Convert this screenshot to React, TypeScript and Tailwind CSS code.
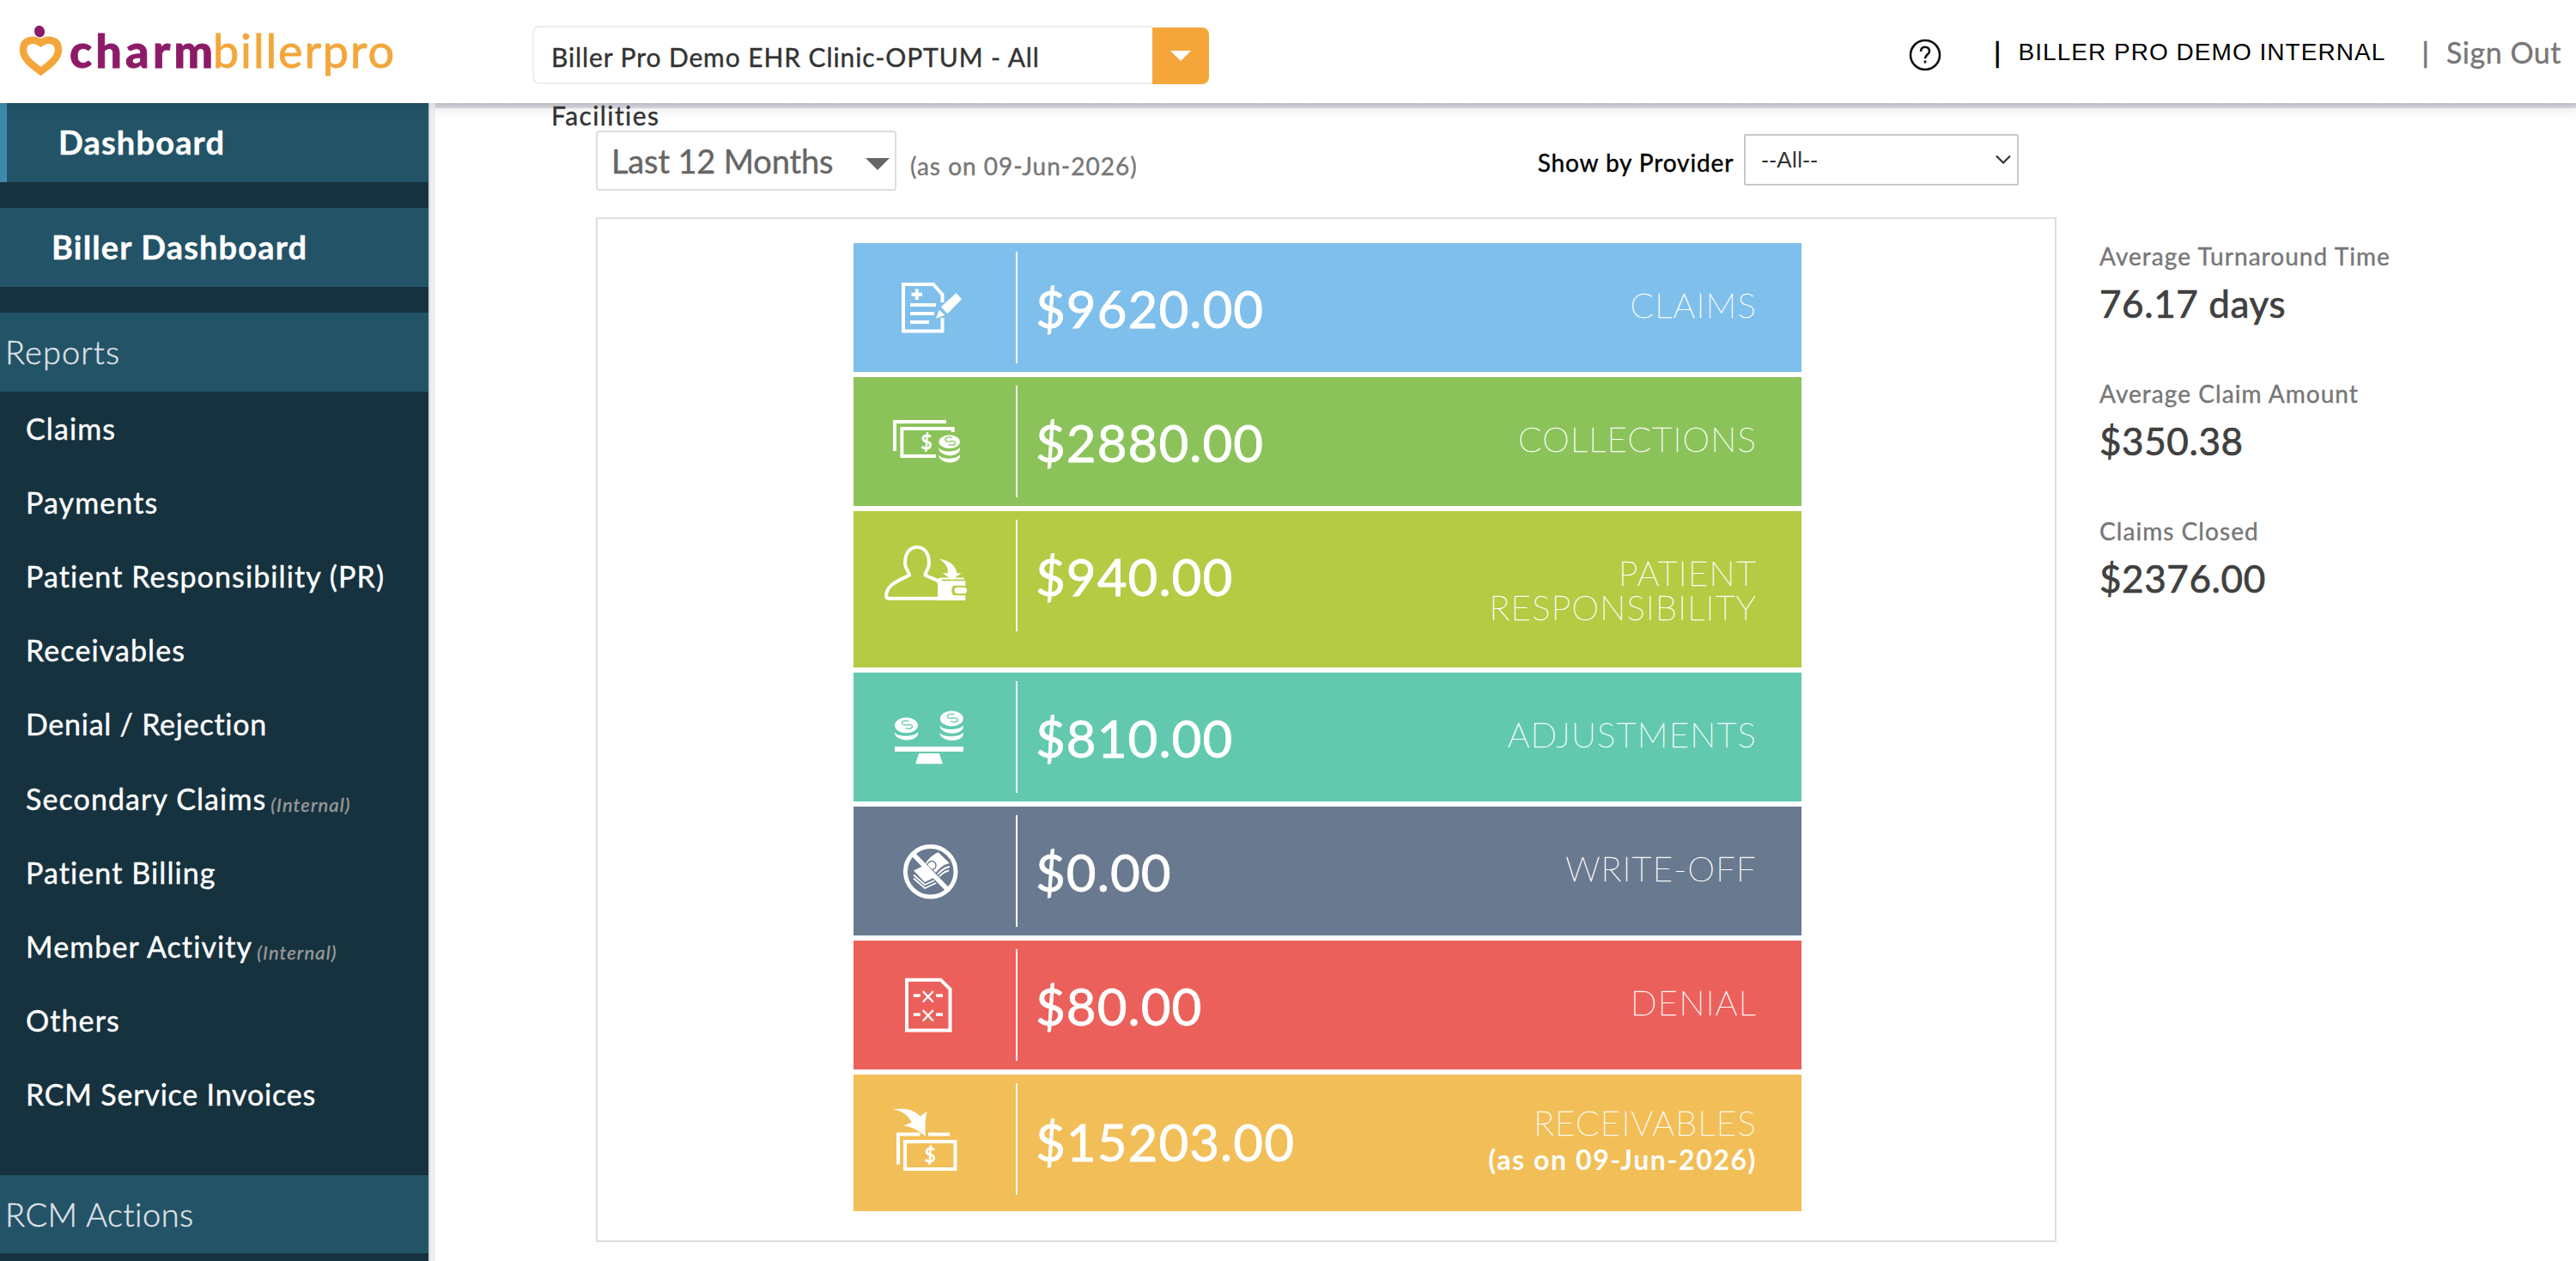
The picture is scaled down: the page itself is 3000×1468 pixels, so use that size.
import type { ReactNode } from 'react';

interface ReportLink {
  label: string;
  internal?: boolean;
  tracking?: string;
}

interface Metric {
  label: string;
  note?: string;
  amount: string;
  color: string;
  height: string;
  icon: ReactNode;
}

const reports: ReportLink[] = [
  { label: 'Claims' },
  { label: 'Payments' },
  { label: 'Patient Responsibility (PR)' },
  { label: 'Receivables' },
  { label: 'Denial / Rejection', tracking: 'tracking-[0.75px]' },
  { label: 'Secondary Claims', internal: true },
  { label: 'Patient Billing' },
  { label: 'Member Activity', internal: true },
  { label: 'Others' },
  { label: 'RCM Service Invoices', tracking: 'tracking-[0.8px]' },
];

const metrics: Metric[] = [
  { label: 'CLAIMS', amount: '$9620.00', color: 'bg-[#7fbfeb]', height: 'h-[150px]', icon: <ClaimsIcon /> },
  { label: 'COLLECTIONS', amount: '$2880.00', color: 'bg-[#8bc35a]', height: 'h-[150px]', icon: <CollectionsIcon /> },
  { label: 'PATIENT RESPONSIBILITY', amount: '$940.00', color: 'bg-[#b4cb43]', height: 'h-[182px]', icon: <PatientIcon /> },
  { label: 'ADJUSTMENTS', amount: '$810.00', color: 'bg-[#62c9af]', height: 'h-[150px]', icon: <AdjustmentsIcon /> },
  { label: 'WRITE-OFF', amount: '$0.00', color: 'bg-[#69798f]', height: 'h-[150px]', icon: <WriteOffIcon /> },
  { label: 'DENIAL', amount: '$80.00', color: 'bg-[#ec605b]', height: 'h-[150px]', icon: <DenialIcon /> },
  { label: 'RECEIVABLES', note: '(as on 09-Jun-2026)', amount: '$15203.00', color: 'bg-[#f2be57]', height: 'h-[159px]', icon: <ReceivablesIcon /> },
];

const stats = [
  { label: 'Average Turnaround Time', value: '76.17 days' },
  { label: 'Average Claim Amount', value: '$350.38' },
  { label: 'Claims Closed', value: '$2376.00' },
];

export default function App() {
  return (
    <div className="flex h-[1468px] w-[3000px] flex-col overflow-hidden bg-white font-['Lato',sans-serif] text-[#333] [-webkit-text-stroke:0.4px]">
      <Header />
      <div className="flex min-h-0 flex-1">
        <Sidebar />
        <main className="flex-1">
          <div className="h-1.5 bg-linear-to-b from-[#c7c7cf] to-[#dcdce0]" />
          <div className="h-3 bg-linear-to-b from-[#f7f7f7] to-white" />
          <div className="mt-3 pl-[187px]">
            <Filters />
            <div className="mt-[33px] flex">
              <section className="flex h-[1193px] w-[1701px] flex-col gap-1.5 border-2 border-[#ddd] pt-7 pl-[298px]">
                {metrics.map((m) => <MetricBar key={m.label} metric={m} />)}
              </section>
              <Stats />
            </div>
          </div>
        </main>
      </div>
    </div>
  );
}

function Header() {
  return (
    <header className="relative z-10 flex h-[120px] shrink-0 items-center bg-white pr-[17px] shadow-[0_0_16px_rgba(0,0,0,0.12)]">
      <Logo />
      <div className="mt-2 ml-[140px] flex h-[68px]">
        <div className="w-[722px] rounded-l-lg border-2 border-r-0 border-[#ededed] pl-5 text-[30px] leading-[68px] tracking-[0.9px]">
          <p>Biller Pro Demo EHR Clinic-OPTUM - All</p>
          <p className="tracking-[1.4px]">Facilities</p>
        </div>
        <button className="mt-0.5 flex h-[66px] w-[66px] items-center justify-center rounded-r-lg bg-[#f4a63b]">
          <svg width="24" height="12" viewBox="0 0 24 12"><path d="M0 0h24L12 12z" fill="#fff" /></svg>
        </button>
      </div>
      <div className="ml-auto flex items-center">
        <svg className="mt-[7px] mr-[61px]" width="38" height="38" viewBox="0 0 38 38" fill="none" stroke="#111" strokeWidth="2.6">
          <circle cx="19" cy="19" r="17" />
          <path d="M14 15c0-3.500 2.200-5.300 5-5.300s5 2 5 4.800c0 4-5 4-5 8.700" />
          <path d="M19 25.500v3" />
        </svg>
        <span className="font-['Liberation_Sans',sans-serif] text-[34px] text-black">|</span>
        <span className="mt-0.5 ml-5 font-['Liberation_Sans',sans-serif] text-[28px] tracking-[1.03px] text-black [-webkit-text-stroke:0]">BILLER PRO DEMO INTERNAL</span>
        <span className="ml-[42px] font-['Liberation_Sans',sans-serif] text-[34px] text-[#777]">|</span>
        <a className="ml-5 text-[34px] tracking-[0.5px] text-[#777]">Sign Out</a>
      </div>
    </header>
  );
}

function Logo() {
  return (
    <svg width="480" height="120" viewBox="0 0 480 120">
      <ellipse cx="46" cy="36.600" rx="6" ry="6.800" fill="#8c1b67" transform="rotate(-15 46 36.600)" />
      <path
        d="M47.500 50C40 45 27 45 27 58C27 68 37 75.500 47.500 83C58 75.500 68 68 68 58C68 45 55 45 47.500 50Z"
        fill="none" stroke="#f4a63b" strokeWidth="8.500"
      />
      <text x="81" y="78.500" fontSize="54" fontWeight="900" fill="#8c1b67" stroke="#8c1b67" strokeWidth="0.800" textLength="167">charm</text>
      <text x="248" y="78.500" fontSize="54" fill="#f4a63b" stroke="#f4a63b" strokeWidth="0.800" textLength="211">billerpro</text>
    </svg>
  );
}

function Sidebar() {
  return (
    <aside className="flex w-[507px] shrink-0 flex-col border-r-6 border-[#edeef3] bg-[#16323f] text-white">
      <div className="flex flex-1 flex-col border-r-2 border-[#d6d7da]">
        <a className="h-[92px] shrink-0 border-l-8 border-[#3d89ab] bg-[#235367] pl-[60px] text-[38px] leading-[91px] font-bold tracking-[1.15px]">Dashboard</a>
        <a className="mt-[30px] h-[92px] shrink-0 bg-[#235367] pl-[60px] text-[38px] leading-[91px] font-bold tracking-[1.15px]">Biller Dashboard</a>
        <h2 className="mt-[30px] h-[92px] shrink-0 bg-[#235367] pl-[6px] text-[38px] leading-[91px] font-light tracking-[1.1px] text-[#e0e4e7]">Reports</h2>
        <nav className="flex h-[912px] shrink-0 flex-col">
          {reports.map((r) => (
            <a
              key={r.label}
              className={`flex shrink-0 pl-[30px] text-[34px] leading-[86px] ${r.tracking ?? 'tracking-[1.1px]'} ${r.label === 'Secondary Claims' ? 'h-[87px] pt-px' : 'h-[86px]'}`}
            >
              {r.label}
              {r.internal && <span className="mt-[7px] ml-[5px] text-[22px] tracking-[1.12px] text-[#999] italic">(Internal)</span>}
            </a>
          ))}
        </nav>
        <h2 className="h-[91px] shrink-0 bg-[#235367] pl-[6px] text-[38px] leading-[91px] font-light tracking-[0.5px] text-[#e0e4e7]">RCM Actions</h2>
      </div>
    </aside>
  );
}

function Filters() {
  return (
    <div className="flex h-[70px] items-center">
      <div className="mt-1 flex h-[70px] w-[350px] items-center justify-between rounded-sm border-2 border-[#ddd] bg-white pr-1.5 pl-4 text-[38px] tracking-[-0.15px] text-[#666]">
        Last 12 Months
        <svg className="mt-2" width="28" height="14" viewBox="0 0 28 14"><path d="M0 0h28L14 14z" fill="#666" /></svg>
      </div>
      <span className="mt-4 ml-4 text-[28px] tracking-[1px] text-[#777]">(as on 09-Jun-2026)</span>
      <label className="mt-2 ml-[466px] text-[28px] tracking-[0.88px] text-black">Show by Provider</label>
      <div className="mt-0.5 ml-3 flex h-[60px] w-80 items-center justify-between rounded-xs border-2 border-[#c8c8c8] bg-white pr-[7px] pl-[18px] font-['Liberation_Sans',sans-serif] text-[26px] tracking-[0.36px] [-webkit-text-stroke:0]">
        --All--
        <svg width="18" height="12" viewBox="0 0 18 12" fill="none" stroke="#333" strokeWidth="2.200"><path d="M1 1.500l8 8 8-8" /></svg>
      </div>
    </div>
  );
}

function MetricBar({ metric }: { metric: Metric }) {
  return (
    <div className={`flex w-[1104px] shrink-0 items-start text-white ${metric.height} ${metric.color}`}>
      {metric.icon}
      <div className="mt-2.5 h-[130px] w-0.5 bg-white" />
      <span className={`ml-[21px] text-[60px] leading-[72px] tracking-[1.05px] [-webkit-text-stroke:0.8px] ${metric.note ? 'mt-[42px]' : 'mt-10'}`}>{metric.amount}</span>
      <div className={`mr-[52px] ml-auto w-[400px] text-right ${metric.note ? 'mt-9' : 'mt-[52px]'}`}>
        <p className="text-[40px] leading-10 font-thin tracking-[1.35px] [-webkit-text-stroke:0.55px]">{metric.label}</p>
        {metric.note && <p className="mt-[3px] text-[32px] leading-10 font-bold tracking-[1.6px] [-webkit-text-stroke:0]">{metric.note}</p>}
      </div>
    </div>
  );
}

function Stats() {
  return (
    <aside className="ml-[50px] pt-[25px]">
      {stats.map((s) => (
        <div key={s.label} className="h-40">
          <p className="text-[28px] leading-10 tracking-[1.05px] text-[#777]">{s.label}</p>
          <p className="mt-[5px] text-[44px] leading-[60px] tracking-[0.6px] text-[#404040] [-webkit-text-stroke:0.7px]">{s.value}</p>
        </div>
      ))}
    </aside>
  );
}

/* Metric icons share one 189x150 canvas so they line up with the divider */

function IconCanvas({ children }: { children: ReactNode }) {
  return (
    <svg className="shrink-0" width="189" height="150" viewBox="0 0 189 150" fill="none" stroke="#fff" strokeWidth="4">
      {children}
    </svg>
  );
}

function Coin({ x, y, rx = 13, ry = 8.5, stack = 1, ink }: { x: number; y: number; rx?: number; ry?: number; stack?: number; ink: string }) {
  return (
    <g stroke="none" fill="#fff">
      <ellipse cx={x} cy={y} rx={rx} ry={ry} />
      <path
        d={`M${x + 3} ${y - 4.5}c-3-2-8-.5-8 2s4 2.500 6 2 6-.5 6 2-5 3.500-8 1.500`}
        fill="none" stroke={ink} strokeWidth="1.300"
      />
      {Array.from({ length: stack }, (_, i) => {
        const top = y + ry + i * 8.2;
        return <path key={i} d={`M${x - rx} ${top - 1}c2 6 ${rx * 2 - 4} 6 ${rx * 2} 0v2.500c-2 9 ${4 - rx * 2} 9 ${-rx * 2} 0z`} />;
      })}
    </g>
  );
}

function ClaimsIcon() {
  return (
    <IconCanvas>
      <path d="M103.500 69V60L93 48H58v54.500h45.500V87" />
      <path d="M67.500 59.700h12.500M73.800 53.500V66M66 72h30M66 82h28M66 92h22" />
      <path d="M119.600 58l6.400 7.300-16.600 17-7.500-8zM99.900 77.700l6.300 6L95.900 88z" fill="#fff" stroke="none" />
    </IconCanvas>
  );
}

function CollectionsIcon() {
  return (
    <IconCanvas>
      <path d="M108 52H48v34" />
      <path d="M115.700 64v-4H56.400v32H96" />
      <text x="84.900" y="83.500" fontSize="23" textAnchor="middle" fill="#fff" stroke="#fff" strokeWidth="0.800">$</text>
      <Coin x={111.700} y={75.300} rx={12.200} ry={7.700} stack={2} ink="#8bc35a" />
    </IconCanvas>
  );
}

function PatientIcon() {
  return (
    <IconCanvas>
      <path d="M100 84l-2-3c-4-2-10-4-14.500-6.500 0-4 4-6 4.500-13.500 0-10-4-19-14-19S60 51 60 61c.5 7.500 5 9.500 5 13.500C53 81 39 85 38 98c0 2.500 1 3.800 3.500 3.800H100" />
      <path d="M98 80.500c0-2 1.500-3 3-3h28v2h-26v1.700h27.300v5.500h-13c-4 0-4 11.300 0 11.300h13v6H98z" fill="#fff" stroke="none" />
      <rect x="117.500" y="88.700" width="14.500" height="7.300" rx="3.500" fill="#fff" stroke="none" />
      <path d="M99.900 55.700c12 1.500 19 7.500 20.500 16.600h5.200L114.500 80l-10.700-7.700h6c1-7-4-13-9.900-16.600z" fill="#fff" stroke="none" />
    </IconCanvas>
  );
}

function AdjustmentsIcon() {
  return (
    <IconCanvas>
      <Coin x={61.500} y={61.300} rx={13.500} ry={9} stack={1} ink="#62c9af" />
      <Coin x={114.300} y={53.500} rx={13.500} ry={9} stack={2} ink="#62c9af" />
      <path d="M48 86.300h80V92H48zM76.200 94h23.700l4 12.200H72.200z" fill="#fff" stroke="none" />
    </IconCanvas>
  );
}

function WriteOffIcon() {
  return (
    <IconCanvas>
      <path d="M98.700 53.300L112 66c-6 1-12 5-16 11L84 66c3-5 8-10 14.700-12.700z" fill="#fff" stroke="none" />
      <path d="M70 74.500l11-5.500 14 13-12 6z" fill="#fff" stroke="none" />
      <circle cx="91" cy="68.500" r="5" stroke="#69798f" strokeWidth="1.400" />
      <path d="M70 79.500l13 11.500 11-5M70 83.500l13 11.500 13-6M112 70c-6 1-10 4-14 9M111 74.500c-5 1-8 3.500-11 7" strokeWidth="1.800" />
      <path d="M69 55l41 42" strokeWidth="5.500" />
      <circle cx="89.700" cy="75.700" r="29.300" strokeWidth="5" />
    </IconCanvas>
  );
}

function DenialIcon() {
  return (
    <IconCanvas>
      <path d="M62 45.700h39.500l11 11V104.500H62z" />
      <path d="M69.800 64h8M96 64h8M69.800 86h8M96 86h8" strokeWidth="3.500" />
      <path d="M80.800 59l12 12.500M92.800 59l-12 12.500M80.800 81l12 12.500M92.800 81l-12 12.500" strokeWidth="2.400" />
    </IconCanvas>
  );
}

function ReceivablesIcon() {
  return (
    <IconCanvas>
      <path d="M52 104.500v-35h25.500M87 69.500h25" />
      <path d="M60 78h58.500v32H60z" />
      <text x="89.200" y="101.500" fontSize="23" textAnchor="middle" fill="#fff" stroke="#fff" strokeWidth="0.800">$</text>
      <path d="M45.300 40.500c14-2 25 0 32.400 8.300l7.900-6c-2.500 9-2.500 19-1.600 29.500-7-7-15-11-25.600-13.100l9.500-3.400c-4-8-11-14-22.600-15.300z" fill="#fff" stroke="none" />
    </IconCanvas>
  );
}
